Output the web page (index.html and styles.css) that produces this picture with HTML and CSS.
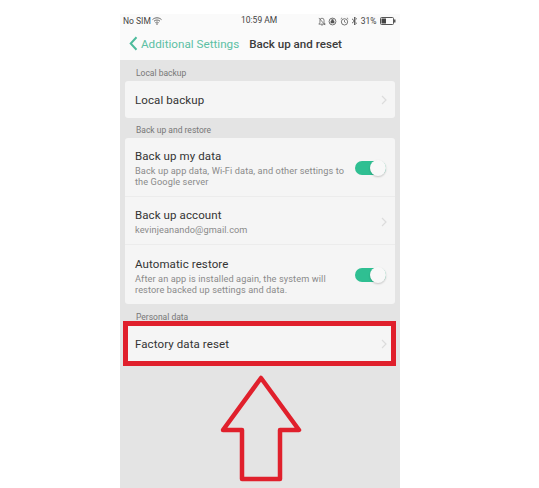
FILE: index.html
```html
<!DOCTYPE html>
<html lang="en">
<head>
<meta charset="utf-8">
<title>Back up and reset</title>
<link rel="stylesheet" href="styles.css">
</head>
<body>
<main class="phone">
  <header class="top">
    <div class="status">
      <div class="status-left">
        <span>No SIM</span>
        <svg class="wifi" width="10" height="8" viewBox="0 0 10 8"><path d="M.5 2.600C3.200.2 6.800.2 9.500 2.600M2 4.200c1.900-1.600 4.100-1.600 6 0M3.400 5.700c1-.8 2.200-.8 3.200 0" fill="none" stroke="#555" stroke-width=".9"/><circle cx="5" cy="7" r=".8" fill="#555"/></svg>
      </div>
      <span class="time">10:59 AM</span>
      <div class="status-right">
        <svg width="8" height="9" viewBox="0 0 9 10"><path d="M1 8h7L6.800 6V3.600a2.300 2.300 0 0 0-4.600 0V6zM3.600 9h1.800M1 1l7 8" fill="none" stroke="#555" stroke-width=".8"/></svg>
        <svg width="9" height="9" viewBox="0 0 10 10"><circle cx="5" cy="5" r="3.800" fill="none" stroke="#555" stroke-width=".9"/><path d="M3.200 4.400h3.600v2.400H3.200zM4 4.400V3.400a1 1 0 0 1 2 0v1" fill="#555" stroke="#555" stroke-width=".5"/></svg>
        <svg width="9" height="9" viewBox="0 0 10 10"><circle cx="5" cy="5.400" r="3.500" fill="none" stroke="#555" stroke-width=".9"/><path d="M5 3.400v2.200l1.400.7M.8 2.200 2.300.9M9.200 2.200 7.700.9" fill="none" stroke="#555" stroke-width=".8"/></svg>
        <svg width="7" height="10" viewBox="0 0 7 10"><path d="M1 2.800 5.500 7 3.500 9V1l2 2L1 7.200" fill="none" stroke="#555" stroke-width=".9"/></svg>
        <span>31%</span>
        <svg class="battery" width="16" height="8" viewBox="0 0 16 8"><rect x=".5" y=".5" width="13" height="7" rx="1" fill="none" stroke="#555"/><rect x="1.500" y="1.500" width="4.500" height="5" fill="#444"/><rect x="14" y="2.500" width="1.500" height="3" fill="#555"/></svg>
      </div>
    </div>
    <nav class="nav">
      <svg class="back" width="9" height="15" viewBox="0 0 9 15"><path d="M7.500 1.200 1.700 7.500l5.800 6.300" fill="none" stroke="#4dbb9c" stroke-width="2"/></svg>
      <span class="back-label">Additional Settings</span>
      <h1 class="title">Back up and reset</h1>
    </nav>
  </header>

  <section class="content">
    <h2 class="section">Local backup</h2>
    <div class="card">
      <div class="row row-single">
        <span class="row-title">Local backup</span>
        <svg class="chev" width="6" height="10" viewBox="0 0 6 10"><path d="M1 1l4 4-4 4" fill="none" stroke="#dcdcdc" stroke-width="1.200"/></svg>
      </div>
    </div>

    <h2 class="section section-b">Back up and restore</h2>
    <div class="card">
      <div class="row row-tall">
        <div class="row-text">
          <span class="row-title">Back up my data</span>
          <p class="row-sub">Back up app data, Wi-Fi data, and other settings to the Google server</p>
        </div>
        <span class="toggle"><span class="knob"></span></span>
      </div>
      <div class="row row-mid">
        <div class="row-text">
          <span class="row-title">Back up account</span>
          <p class="row-sub">kevinjeanando@gmail.com</p>
        </div>
        <svg class="chev" width="6" height="10" viewBox="0 0 6 10"><path d="M1 1l4 4-4 4" fill="none" stroke="#dcdcdc" stroke-width="1.200"/></svg>
      </div>
      <div class="row row-tall">
        <div class="row-text">
          <span class="row-title">Automatic restore</span>
          <p class="row-sub">After an app is installed again, the system will restore backed up settings and data.</p>
        </div>
        <span class="toggle"><span class="knob"></span></span>
      </div>
    </div>

    <h2 class="section section-c">Personal data</h2>
    <div class="card card-reset">
      <div class="row row-reset">
        <span class="row-title">Factory data reset</span>
        <svg class="chev" width="6" height="10" viewBox="0 0 6 10"><path d="M1 1l4 4-4 4" fill="none" stroke="#dcdcdc" stroke-width="1.200"/></svg>
      </div>
    </div>
  </section>

  <div class="highlight"></div>
  <svg class="arrow" width="84" height="110" viewBox="0 0 84 110"><path d="M41 3 79 55H60V104H22V55H3Z" fill="none" stroke="#e0202c" stroke-width="4.500" stroke-linejoin="round"/></svg>
</main>
</body>
</html>
```
FILE: styles.css
```css
* { box-sizing: border-box; }
html, body { margin: 0; padding: 0; background: #fff; }
body { width: 539px; height: 488px; overflow: hidden; font-family: Roboto, "Liberation Sans", sans-serif; }
.phone { position: relative; width: 280px; height: 474px; margin: 14px 0 0 120px; background: #e4e4e4; }
.top { height: 46px; background: #fafafa; padding: 0 3px; }
.status { display: flex; align-items: center; justify-content: space-between; height: 14px; font-size: 8.500px; color: #444; position: relative; }
.status-left { display: flex; align-items: center; gap: 1px; }
.status-right { display: flex; align-items: center; gap: 2.500px; margin-right: 1px; }
.battery { margin-left: 1px; }
.time { position: absolute; left: 118px; top: 1px; }
.nav { display: flex; align-items: center; height: 32px; padding: 0 0 1px 6px; }
.back { margin-right: 3px; }
.back-label { font-size: 11.700px; color: #5cc0a4; }
.title { margin: 0 0 0 10px; font-size: 11.600px; font-weight: 500; color: #3c3c3c; }
.content { padding: 0 5px; }
.section { margin: 0; padding-left: 11px; font-size: 8.500px; font-weight: 400; color: #777; line-height: 11px; }
.section:first-child { padding-top: 8px; height: 21px; }
.section-b { padding-top: 7px; height: 20px; }
.section-c { padding-top: 8px; height: 21px; }
.card { background: #f5f5f5; border-radius: 3px; overflow: hidden; }
.row { display: flex; align-items: center; justify-content: space-between; padding: 2px 9px 0 10px; border-bottom: 1px solid #ececec; }
.row:last-child { border-bottom: 0; }
.row-single { height: 37px; padding-top: 1px; }
.row-tall { height: 59px; }
.row-mid { height: 48px; }
.row-reset { height: 37px; padding-top: 1px; }
.row-text { flex: 1; min-width: 0; }
.row-title { display: block; font-size: 11.500px; line-height: 15px; color: #333; letter-spacing: .1px; }
.row-sub { margin: 1px 0 0; width: 214px; font-size: 9.200px; line-height: 11px; color: #8a8a8a; letter-spacing: .1px; }
.chev { flex: none; margin-right: -1px; }
.toggle { position: relative; flex: none; width: 31px; height: 14px; margin-bottom: 1px; border-radius: 7px; background: #2fbf92; }
.knob { position: absolute; right: 0; top: -1px; width: 16px; height: 16px; border-radius: 50%; background: #f8f8f8; box-shadow: 0 1px 2px rgba(0,0,0,.2); }
.highlight { position: absolute; left: 3px; top: 307px; width: 273px; height: 45px; border: 5px solid #e0202c; }
.arrow { position: absolute; left: 100px; top: 361px; }
```
